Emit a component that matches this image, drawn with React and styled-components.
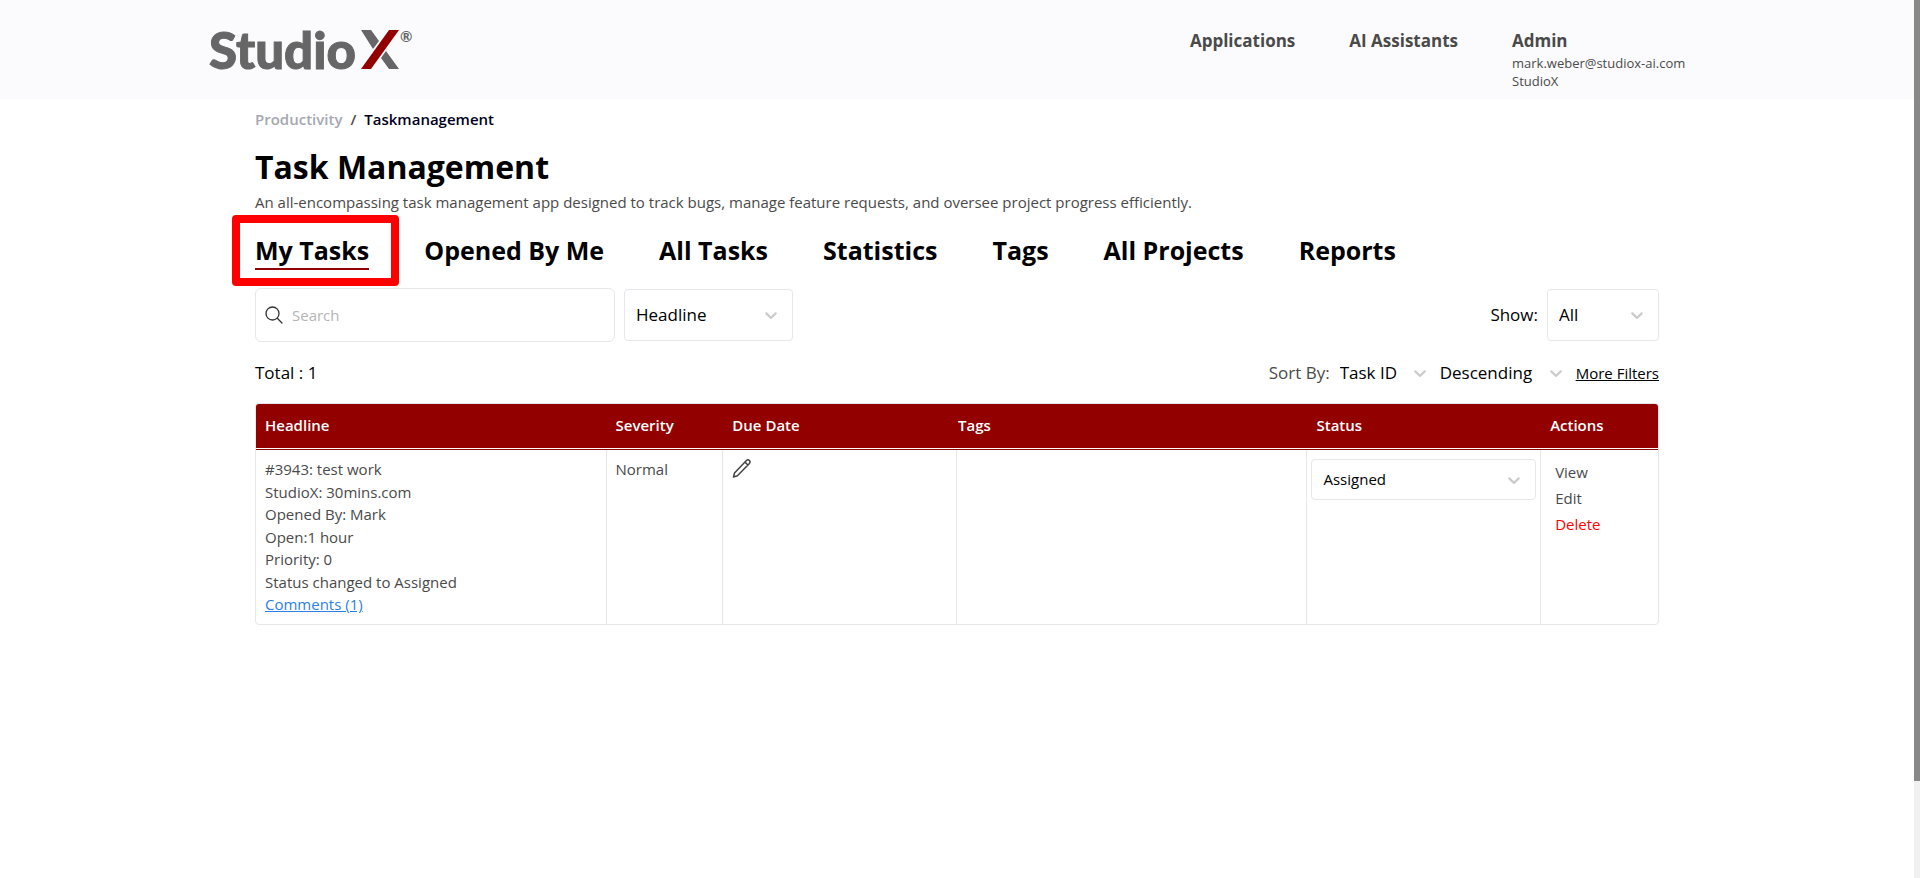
import { useState } from 'react';
import styled, { createGlobalStyle } from 'styled-components';

const GlobalStyle = createGlobalStyle`
  :root {
    --color-brand: #920000;
    --color-text: #4a4a4a;
    --color-border: #e5e7eb;
    --font-small: 13px;
    --font-base: 15px;
    --font-medium: 17px;
  }

  * {
    box-sizing: border-box;
  }

  body {
    margin: 0;
    background: #fff;
    color: #000;
    font-family: 'Open Sans', 'Noto Sans', sans-serif;
    font-size: var(--font-base);
    line-height: 1.5;
  }

  button,
  input,
  select {
    font: inherit;
    color: inherit;
  }

  a {
    color: inherit;
    text-decoration: none;
  }
`;

// ------------------------------
// Page shell
// ------------------------------
const Shell = styled.div`
  display: flex;
  height: 100vh;
`;

const Page = styled.div`
  flex: 1;
  min-width: 0;
  overflow: hidden;
`;

const ScrollRail = styled.div`
  width: 6px;
  background: #f1f1f1;
`;

const ScrollThumb = styled.div`
  height: 89%;
  background: #888;
`;

// ------------------------------
// Header
// ------------------------------
const HeaderBar = styled.header`
  background: #fbfbfd;
`;

const HeaderInner = styled.div`
  display: flex;
  justify-content: space-between;
  max-width: 1536px;
  height: 99px;
  margin: 0 auto;
  padding: 28px 43px 0 20px;
`;

const Logo = styled.a`
  display: flex;
  align-items: flex-start;
  color: #666;
  font-family: Lato, sans-serif;
  font-size: 51px;
  font-weight: 900;
  line-height: 44px;
  -webkit-text-stroke: 1px #666;
`;

const LogoMark = styled.svg`
  width: 39px;
  height: 39px;
  margin: 2px 0 0 5px;
`;

const Registered = styled.span`
  font-size: 15px;
  font-weight: 700;
  line-height: 16px;
  -webkit-text-stroke: 0;
`;

const Nav = styled.nav`
  display: flex;
  gap: 54px;
`;

const NavLink = styled.a`
  color: var(--color-text);
  font-size: var(--font-medium);
  font-weight: 700;
  line-height: 26px;
  white-space: nowrap;
`;

const Account = styled.div`
  display: flex;
  flex: none;
  flex-direction: column;
  width: 170px;
  color: var(--color-text);
  font-size: var(--font-small);
  line-height: 18px;
  white-space: nowrap;
`;

// ------------------------------
// Title block
// ------------------------------
const Main = styled.main`
  max-width: 1536px;
  margin: 0 auto;
  padding: 7px 66px 0;
`;

const Breadcrumb = styled.nav`
  display: flex;
  gap: 8px;
  color: var(--color-text);
  font-weight: 600;
  line-height: 26px;
`;

const Crumb = styled.a`
  color: ${({ $current }) => ($current ? '#000021' : '#a5a8b0')};
`;

const Title = styled.h1`
  margin: 11px 0 0;
  font-size: 32px;
  font-weight: 700;
  line-height: 48px;
`;

const SubTitle = styled.p`
  margin: 0;
  color: var(--color-text);
  line-height: 22px;
`;

const Tabs = styled.div`
  display: flex;
  gap: 55px;
  margin-top: 20px;
`;

const Tab = styled.button`
  position: relative;
  padding: 0;
  border: 0;
  border-bottom: 2px solid
    ${({ $active }) => ($active ? 'var(--color-brand)' : 'transparent')};
  background: none;
  font-size: 25px;
  font-weight: 700;
  line-height: 35px;
  white-space: nowrap;
  cursor: pointer;
`;

// Red frame that points at the first tab
const Highlight = styled.span`
  position: absolute;
  inset: -18px -30px -18px -23px;
  border: 8px solid #f00;
  border-radius: 4px;
  pointer-events: none;
`;

// ------------------------------
// Filters
// ------------------------------
const Row = styled.div`
  display: flex;
  align-items: center;
  justify-content: space-between;
  margin-top: 18px;
  font-size: var(--font-medium);
  line-height: 26px;
`;

const Group = styled.div`
  display: flex;
  align-items: center;
  gap: ${({ $gap }) => $gap || 9}px;
`;

const SearchBox = styled.label`
  display: flex;
  align-items: center;
  gap: 9px;
  width: 360px;
  height: 54px;
  padding: 0 9px;
  border: 1px solid var(--color-border);
  border-radius: 6px;
  color: #333;
`;

const SearchInput = styled.input`
  flex: 1;
  min-width: 0;
  padding: 0;
  border: 0;
  outline: 0;
  background: none;
  font-size: var(--font-base);

  &::placeholder {
    color: #b5b5b5;
    opacity: 1;
  }
`;

const SelectWrap = styled.span`
  display: flex;
  align-items: center;
  width: ${({ $width }) => $width};
  height: ${({ $height }) => $height || 26}px;
  border: ${({ $plain }) =>
    $plain ? '0' : '1px solid var(--color-border)'};
  border-radius: 4px;
  background: #fff;
`;

const StyledSelect = styled.select`
  appearance: none;
  flex: 1;
  min-width: 0;
  height: 100%;
  margin-right: -34px;
  padding: 0 34px 0 ${({ $plain }) => ($plain ? 0 : 11)}px;
  border: 0;
  outline: 0;
  background: none;
  color: #000;
`;

const Chevron = styled.svg`
  flex: none;
  width: 20px;
  height: 20px;
  margin-right: ${({ $plain }) => ($plain ? 0 : 11)}px;
  fill: #ccc;
  pointer-events: none;
`;

const SortLabel = styled.span`
  color: var(--color-text);
`;

const MoreFilters = styled.a`
  font-size: var(--font-base);
  text-decoration: underline;
`;

// ------------------------------
// Table
// ------------------------------
const TableFrame = styled.div`
  margin-top: 17px;
  border: 1px solid var(--color-border);
  border-radius: 4px;
  overflow: hidden;
`;

const Table = styled.table`
  width: 100%;
  border-collapse: separate;
  border-spacing: 0;
  table-layout: fixed;
`;

const HeadCell = styled.th`
  width: ${({ $span }) => ($span * 100) / 12}%;
  height: 46px;
  padding: 0 9px 2px ${({ $flush }) => ($flush ? 1 : 9)}px;
  border-bottom: 1px solid var(--color-brand);
  background: var(--color-brand);
  box-shadow: inset 0 -1px #fff;
  color: #fff;
  font-size: var(--font-base);
  font-weight: 600;
  text-align: left;
`;

const Cell = styled.td`
  height: 174px;
  padding: ${({ $tight }) => ($tight ? '9px 4px' : '8px 9px')};
  border-right: 1px solid var(--color-border);
  color: var(--color-text);
  vertical-align: top;

  &:last-child {
    border-right: 0;
  }
`;

const CommentsLink = styled.a`
  color: #2b80e8;
  text-decoration: underline;
`;

const IconButton = styled.button`
  display: flex;
  padding: 0;
  border: 0;
  background: none;
  cursor: pointer;
`;

const Actions = styled.div`
  display: flex;
  flex-direction: column;
  align-items: flex-start;
  padding-left: 10px;
`;

const Action = styled.button`
  padding: 0;
  border: 0;
  background: none;
  color: ${({ $danger }) => ($danger ? '#f00' : 'inherit')};
  line-height: 26px;
  cursor: pointer;
`;

const tabs = [
  'My Tasks',
  'Opened By Me',
  'All Tasks',
  'Statistics',
  'Tags',
  'All Projects',
  'Reports',
];

const columns = [
  { name: 'Headline', span: 3 },
  { name: 'Severity', span: 1 },
  { name: 'Due Date', span: 2 },
  { name: 'Tags', span: 3, flush: true },
  { name: 'Status', span: 2 },
  { name: 'Actions', span: 1 },
];

const task = {
  severity: 'Normal',
  lines: [
    '#3943: test work',
    'StudioX: 30mins.com',
    'Opened By: Mark',
    'Open:1 hour',
    'Priority: 0',
    'Status changed to Assigned',
  ],
};

function Select({ id, label, options, width, height, plain }) {
  return (
    <SelectWrap $width={width} $height={height} $plain={plain}>
      <StyledSelect id={id} aria-label={label} $plain={plain}>
        {options.map((option) => (
          <option key={option}>{option}</option>
        ))}
      </StyledSelect>
      <Chevron viewBox="0 0 20 20" $plain={plain} aria-hidden="true">
        <path d="M4.516 7.548c0.436-0.446 1.043-0.481 1.576 0l3.908 3.747 3.908-3.747c0.533-0.481 1.141-0.446 1.574 0 0.436 0.445 0.408 1.197 0 1.615-0.406 0.418-4.695 4.502-4.695 4.502-0.217 0.223-0.502 0.335-0.787 0.335s-0.57-0.112-0.789-0.335c0 0-4.287-4.084-4.695-4.502s-0.436-1.17 0-1.615z" />
      </Chevron>
    </SelectWrap>
  );
}

function Header() {
  return (
    <HeaderBar>
      <HeaderInner>
        <Logo href="#">
          Studio
          <LogoMark viewBox="0 0 39 39" aria-label="X">
            <path d="M0 0h10l8 11-6 8zM25 21l13 18H28l-8-11z" fill="#666" />
            <path d="M28 0h10L10 39H0z" fill="#920000" />
          </LogoMark>
          <Registered>®</Registered>
        </Logo>
        <Nav>
          <NavLink href="#">Applications</NavLink>
          <NavLink href="#">AI Assistants</NavLink>
          <Account>
            <NavLink href="#">Admin</NavLink>
            <span>mark.weber@studiox-ai.com</span>
            <span>StudioX</span>
          </Account>
        </Nav>
      </HeaderInner>
    </HeaderBar>
  );
}

function TaskTable() {
  return (
    <TableFrame>
      <Table>
        <thead>
          <tr>
            {columns.map(({ name, span, flush }) => (
              <HeadCell key={name} $span={span} $flush={flush}>
                {name}
              </HeadCell>
            ))}
          </tr>
        </thead>
        <tbody>
          <tr>
            <Cell>
              {task.lines.map((line) => (
                <div key={line}>{line}</div>
              ))}
              <CommentsLink href="#">Comments (1)</CommentsLink>
            </Cell>
            <Cell>{task.severity}</Cell>
            <Cell>
              <IconButton aria-label="Edit due date">
                <svg
                  width="20"
                  height="20"
                  viewBox="0 0 20 20"
                  fill="none"
                  stroke="#444"
                  strokeWidth="1.5"
                  strokeLinejoin="round"
                  aria-hidden="true"
                >
                  <path d="M1.5 19l1-4L14.2 2.700c1.200-1.100 2.500-.9 3.200-.2s.9 2-.2 3.200L5.400 17.800zM13 4.100l2.900 2.900" />
                </svg>
              </IconButton>
            </Cell>
            <Cell />
            <Cell $tight>
              <Select
                label="Status"
                width="100%"
                height={41}
                options={['Assigned', 'In Progress', 'Resolved']}
              />
            </Cell>
            <Cell $tight>
              <Actions>
                <Action>View</Action>
                <Action>Edit</Action>
                <Action $danger>Delete</Action>
              </Actions>
            </Cell>
          </tr>
        </tbody>
      </Table>
    </TableFrame>
  );
}

function App() {
  const [active, setActive] = useState('My Tasks');

  return (
    <>
      <GlobalStyle />
      <Shell>
        <Page>
          <Header />
          <Main>
            <Breadcrumb aria-label="Breadcrumb">
              <Crumb href="#">Productivity</Crumb>
              <span>/</span>
              <Crumb href="#" $current>
                Taskmanagement
              </Crumb>
            </Breadcrumb>
            <Title>Task Management</Title>
            <SubTitle>
              An all-encompassing task management app designed to track bugs,
              manage feature requests, and oversee project progress efficiently.
            </SubTitle>
            <Tabs>
              {tabs.map((tab, index) => (
                <Tab
                  key={tab}
                  $active={tab === active}
                  onClick={() => setActive(tab)}
                >
                  {tab}
                  {index === 0 && <Highlight />}
                </Tab>
              ))}
            </Tabs>
            <Row>
              <Group>
                <SearchBox>
                  <svg
                    width="18"
                    height="18"
                    viewBox="0 0 18 18"
                    fill="none"
                    stroke="currentColor"
                    strokeWidth="1.3"
                    strokeLinecap="round"
                    aria-hidden="true"
                  >
                    <circle cx="7.5" cy="7.5" r="6.5" />
                    <path d="M12.3 12.3l4.7 4.7" />
                  </svg>
                  <SearchInput placeholder="Search" aria-label="Search" />
                </SearchBox>
                <Select
                  label="Search by"
                  width="169px"
                  height={52}
                  options={['Headline', 'Tags']}
                />
              </Group>
              <Group>
                <label htmlFor="show">Show:</label>
                <Select
                  id="show"
                  width="112px"
                  height={52}
                  options={['All', 'Open', 'Closed']}
                />
              </Group>
            </Row>
            <Row>
              <span>Total : 1</span>
              <Group $gap={10}>
                <SortLabel>Sort By:</SortLabel>
                <Select
                  label="Sort field"
                  width="90px"
                  plain
                  options={['Task ID', 'Due Date']}
                />
                <Select
                  label="Sort order"
                  width="126px"
                  plain
                  options={['Descending', 'Ascending']}
                />
                <MoreFilters href="#">More Filters</MoreFilters>
              </Group>
            </Row>
            <TaskTable />
          </Main>
        </Page>
        <ScrollRail>
          <ScrollThumb />
        </ScrollRail>
      </Shell>
    </>
  );
}

export default App;
